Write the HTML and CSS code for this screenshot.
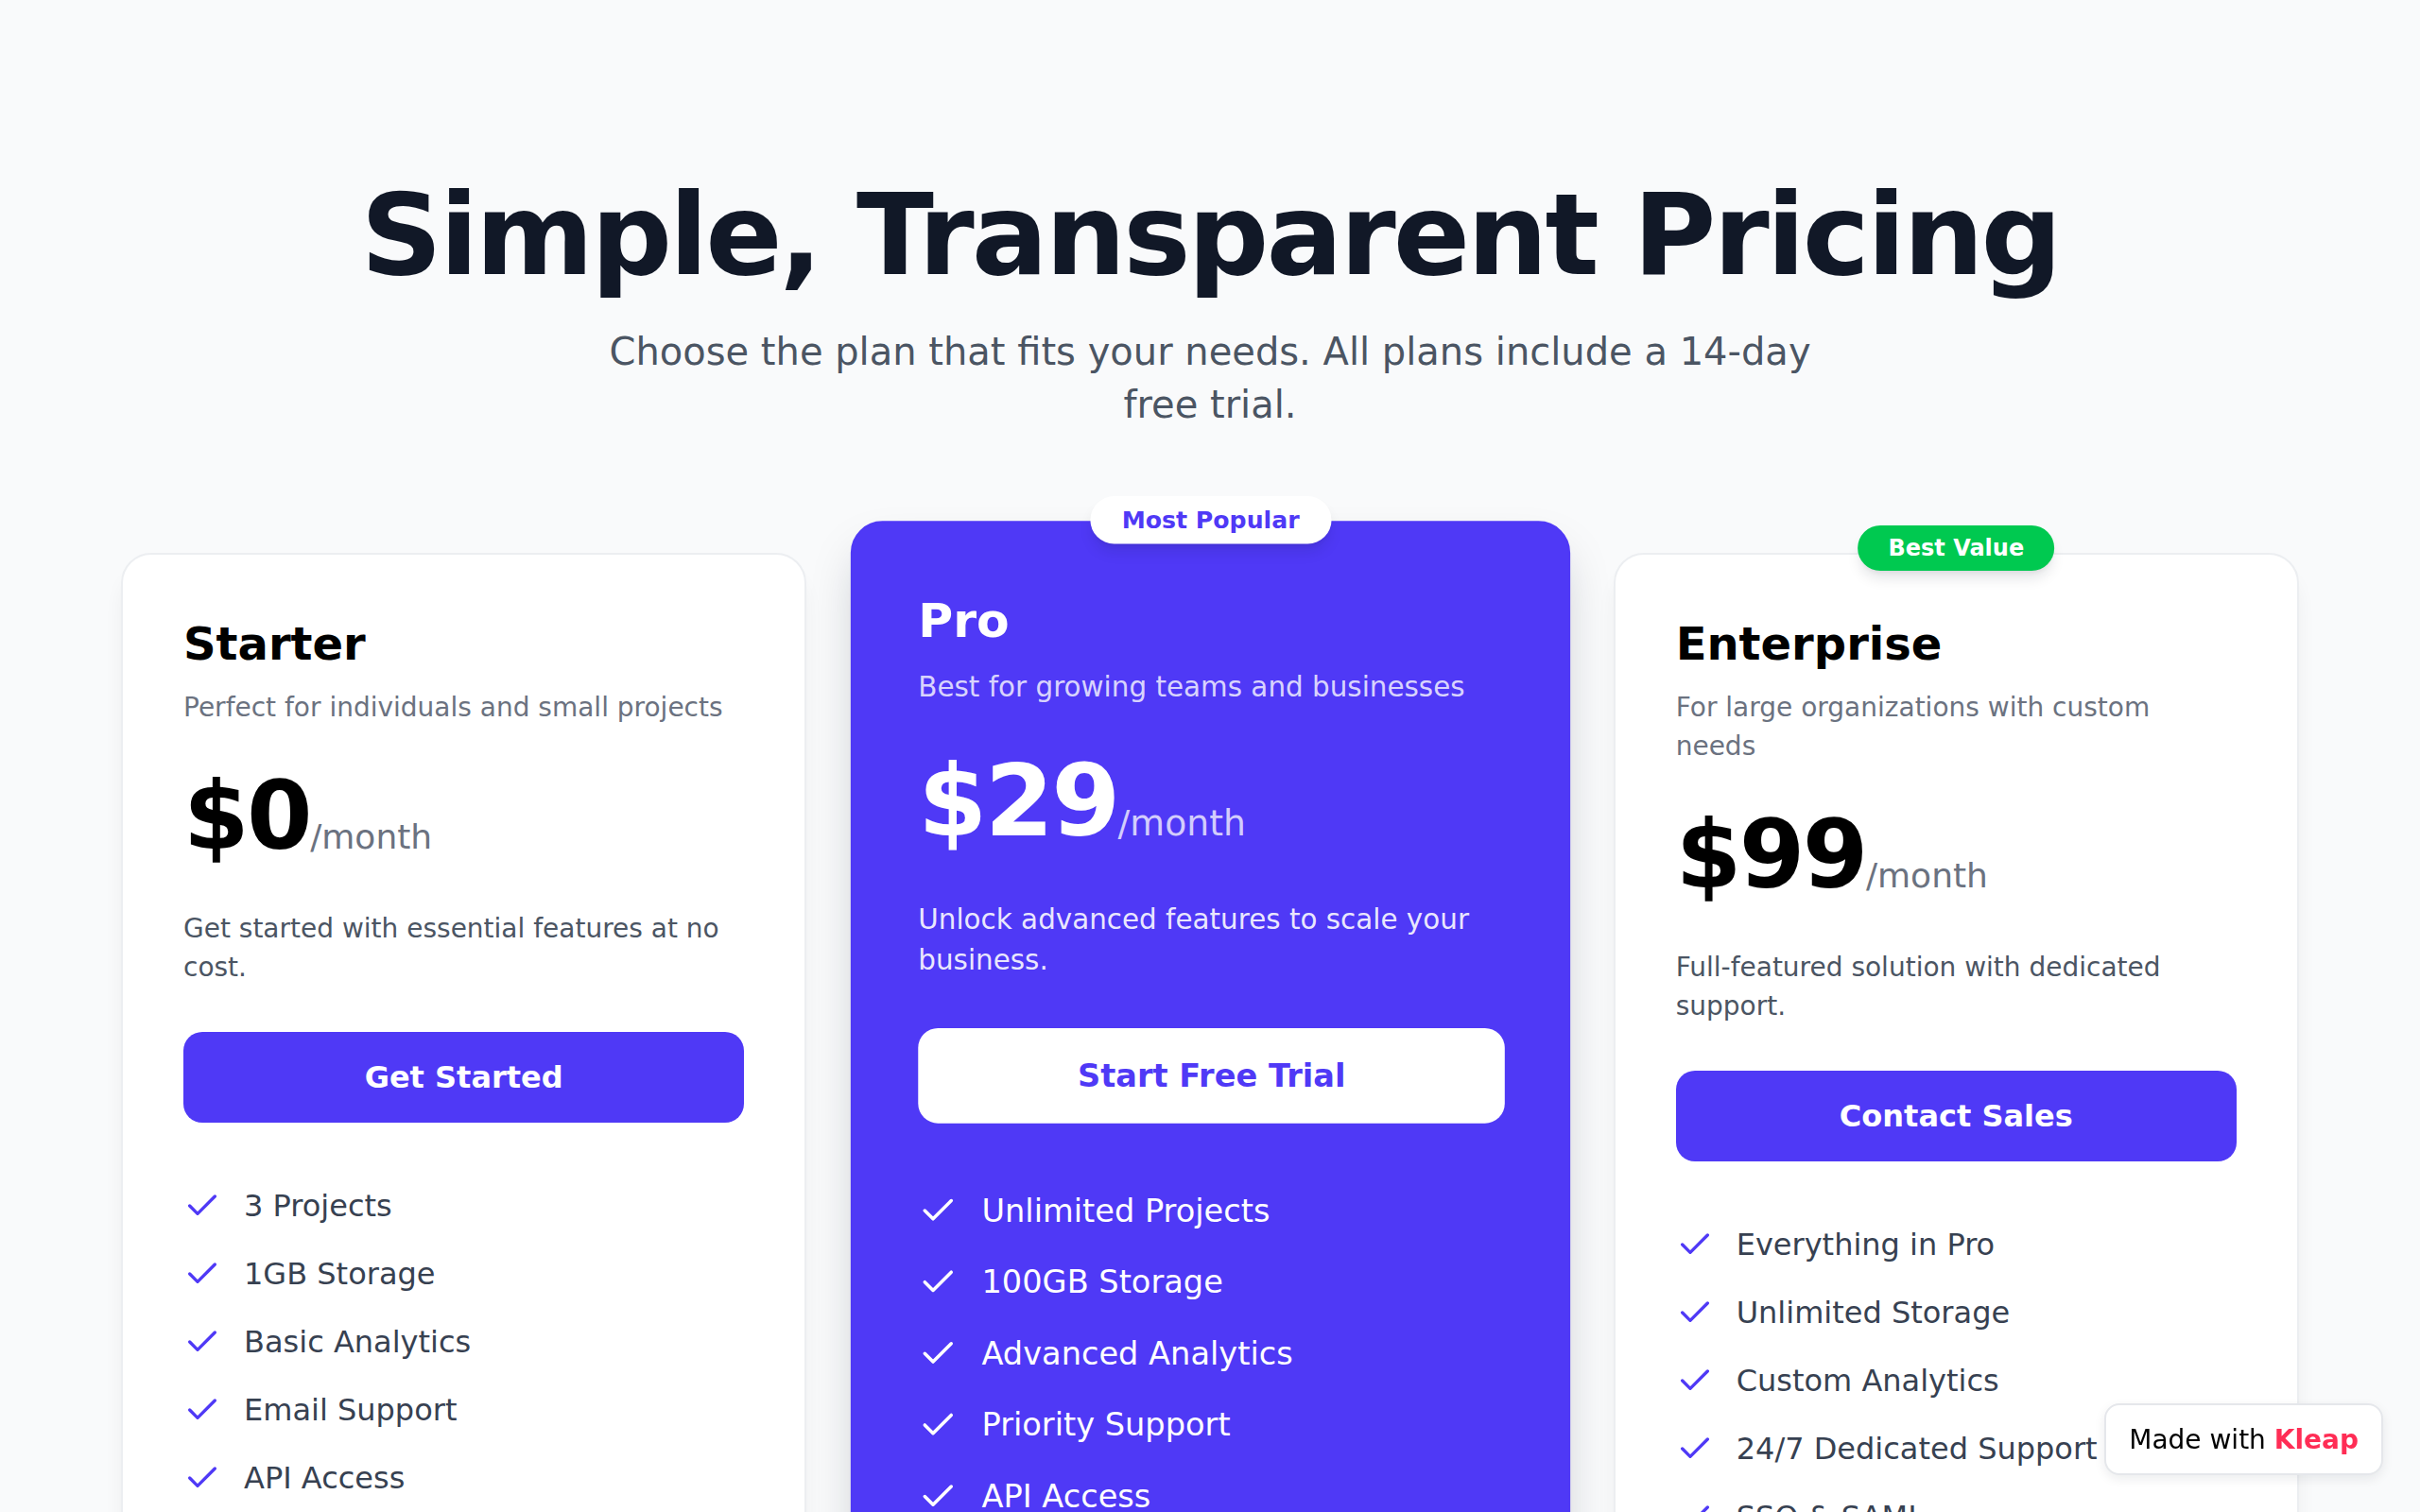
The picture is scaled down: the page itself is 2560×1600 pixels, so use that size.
FILE: index.html
```html
<!DOCTYPE html>
<html lang="en">
<head>
<meta charset="utf-8">
<title>Pricing</title>
<link rel="stylesheet" href="styles.css">
</head>
<body>
<main class="pricing">
  <header class="pricing-head">
    <h1 class="pricing-title">Simple, Transparent Pricing</h1>
    <p class="pricing-lead">Choose the plan that fits your needs. All plans include a 14-day free trial.</p>
  </header>

  <section class="plans">
    <article class="plan">
      <h2 class="plan-name">Starter</h2>
      <p class="plan-tagline">Perfect for individuals and small projects</p>
      <div class="plan-price"><span class="plan-amount">$0</span><span class="plan-period">/month</span></div>
      <p class="plan-blurb">Get started with essential features at no cost.</p>
      <button class="plan-cta" type="button">Get Started</button>
      <ul class="plan-features">
        <li><svg class="check" viewBox="0 0 24 24" fill="none" stroke="currentColor" stroke-width="2" stroke-linecap="round" stroke-linejoin="round"><path d="M20 6 9 17l-5-5"/></svg>3 Projects</li>
        <li><svg class="check" viewBox="0 0 24 24" fill="none" stroke="currentColor" stroke-width="2" stroke-linecap="round" stroke-linejoin="round"><path d="M20 6 9 17l-5-5"/></svg>1GB Storage</li>
        <li><svg class="check" viewBox="0 0 24 24" fill="none" stroke="currentColor" stroke-width="2" stroke-linecap="round" stroke-linejoin="round"><path d="M20 6 9 17l-5-5"/></svg>Basic Analytics</li>
        <li><svg class="check" viewBox="0 0 24 24" fill="none" stroke="currentColor" stroke-width="2" stroke-linecap="round" stroke-linejoin="round"><path d="M20 6 9 17l-5-5"/></svg>Email Support</li>
        <li><svg class="check" viewBox="0 0 24 24" fill="none" stroke="currentColor" stroke-width="2" stroke-linecap="round" stroke-linejoin="round"><path d="M20 6 9 17l-5-5"/></svg>API Access</li>
      </ul>
    </article>

    <article class="plan plan--featured">
      <span class="plan-badge plan-badge--popular">Most Popular</span>
      <h2 class="plan-name">Pro</h2>
      <p class="plan-tagline">Best for growing teams and businesses</p>
      <div class="plan-price"><span class="plan-amount">$29</span><span class="plan-period">/month</span></div>
      <p class="plan-blurb">Unlock advanced features to scale your business.</p>
      <button class="plan-cta" type="button">Start Free Trial</button>
      <ul class="plan-features">
        <li><svg class="check" viewBox="0 0 24 24" fill="none" stroke="currentColor" stroke-width="2" stroke-linecap="round" stroke-linejoin="round"><path d="M20 6 9 17l-5-5"/></svg>Unlimited Projects</li>
        <li><svg class="check" viewBox="0 0 24 24" fill="none" stroke="currentColor" stroke-width="2" stroke-linecap="round" stroke-linejoin="round"><path d="M20 6 9 17l-5-5"/></svg>100GB Storage</li>
        <li><svg class="check" viewBox="0 0 24 24" fill="none" stroke="currentColor" stroke-width="2" stroke-linecap="round" stroke-linejoin="round"><path d="M20 6 9 17l-5-5"/></svg>Advanced Analytics</li>
        <li><svg class="check" viewBox="0 0 24 24" fill="none" stroke="currentColor" stroke-width="2" stroke-linecap="round" stroke-linejoin="round"><path d="M20 6 9 17l-5-5"/></svg>Priority Support</li>
        <li><svg class="check" viewBox="0 0 24 24" fill="none" stroke="currentColor" stroke-width="2" stroke-linecap="round" stroke-linejoin="round"><path d="M20 6 9 17l-5-5"/></svg>API Access</li>
      </ul>
    </article>

    <article class="plan">
      <span class="plan-badge plan-badge--value">Best Value</span>
      <h2 class="plan-name">Enterprise</h2>
      <p class="plan-tagline">For large organizations with custom needs</p>
      <div class="plan-price"><span class="plan-amount">$99</span><span class="plan-period">/month</span></div>
      <p class="plan-blurb">Full-featured solution with dedicated support.</p>
      <button class="plan-cta" type="button">Contact Sales</button>
      <ul class="plan-features">
        <li><svg class="check" viewBox="0 0 24 24" fill="none" stroke="currentColor" stroke-width="2" stroke-linecap="round" stroke-linejoin="round"><path d="M20 6 9 17l-5-5"/></svg>Everything in Pro</li>
        <li><svg class="check" viewBox="0 0 24 24" fill="none" stroke="currentColor" stroke-width="2" stroke-linecap="round" stroke-linejoin="round"><path d="M20 6 9 17l-5-5"/></svg>Unlimited Storage</li>
        <li><svg class="check" viewBox="0 0 24 24" fill="none" stroke="currentColor" stroke-width="2" stroke-linecap="round" stroke-linejoin="round"><path d="M20 6 9 17l-5-5"/></svg>Custom Analytics</li>
        <li><svg class="check" viewBox="0 0 24 24" fill="none" stroke="currentColor" stroke-width="2" stroke-linecap="round" stroke-linejoin="round"><path d="M20 6 9 17l-5-5"/></svg>24/7 Dedicated Support</li>
        <li><svg class="check" viewBox="0 0 24 24" fill="none" stroke="currentColor" stroke-width="2" stroke-linecap="round" stroke-linejoin="round"><path d="M20 6 9 17l-5-5"/></svg>SSO &amp; SAML</li>
        <li><svg class="check" viewBox="0 0 24 24" fill="none" stroke="currentColor" stroke-width="2" stroke-linecap="round" stroke-linejoin="round"><path d="M20 6 9 17l-5-5"/></svg>Custom Integrations</li>
      </ul>
    </article>
  </section>
</main>

<a class="made-with" href="#">Made with <strong>Kleap</strong></a>
</body>
</html>
```

FILE: styles.css
```css
* {
  box-sizing: border-box;
}

body {
  margin: 0;
  background: #f9fafb;
  font-family: "DejaVu Sans", "Noto Sans", sans-serif;
  color: #111827;
}

/* Page header */
.pricing {
  padding: 189px 128px 160px;
}

.pricing-head {
  display: flex;
  flex-direction: column;
  align-items: center;
  text-align: center;
}

.pricing-title {
  margin: 0;
  font-size: 120px;
  line-height: 1;
  font-weight: 700;
  letter-spacing: -0.025em;
  color: #111827;
}

.pricing-lead {
  margin: 35px 0 0;
  max-width: 1300px;
  font-size: 40px;
  line-height: 56px;
  color: #4b5563;
}

/* Plan cards */
.plans {
  margin-top: 129px;
  display: grid;
  grid-template-columns: repeat(3, minmax(0, 1fr));
  gap: 64px;
}

.plan {
  position: relative;
  background: #ffffff;
  border: 2px solid #eceef1;
  border-radius: 32px;
  padding: 64px;
  box-shadow: 0 20px 25px -5px rgba(17, 24, 39, 0.07), 0 8px 10px -6px rgba(17, 24, 39, 0.07);
}

.plan-name {
  margin: 0;
  font-size: 48px;
  line-height: 60px;
  font-weight: 700;
  color: #000000;
}

.plan-tagline {
  margin: 17px 0 0;
  font-size: 28px;
  line-height: 41px;
  color: #6b7280;
}

.plan-price {
  margin-top: 45px;
  display: flex;
  align-items: baseline;
}

.plan-amount {
  font-size: 100px;
  line-height: 100px;
  font-weight: 700;
  letter-spacing: -0.025em;
  color: #000000;
}

.plan-period {
  font-size: 36px;
  color: #6b7280;
}

.plan-blurb {
  margin: 48px 0 0;
  font-size: 28px;
  line-height: 41px;
  color: #4b5563;
}

.plan-cta {
  display: block;
  width: 100%;
  margin-top: 48px;
  padding: 24px;
  border: 0;
  border-radius: 20px;
  background: #4f39f6;
  color: #ffffff;
  font-family: inherit;
  font-size: 32px;
  line-height: 48px;
  font-weight: 700;
  cursor: pointer;
}

.plan-features {
  list-style: none;
  margin: 64px 0 0;
  padding: 0;
  display: flex;
  flex-direction: column;
  gap: 24px;
}

.plan-features li {
  display: flex;
  align-items: center;
  gap: 24px;
  font-size: 32px;
  line-height: 48px;
  color: #374151;
}

.check {
  width: 40px;
  height: 40px;
  flex: none;
  color: #4f39f6;
}

/* Highlighted plan */
.plan--featured {
  z-index: 1;
  margin-top: -4px;
  padding: 68px 64px 64px 66px;
  background: #4f39f6;
  border-color: #4f39f6;
  transform: translateX(1px) scale(1.05);
  box-shadow: 0 25px 50px -12px rgba(17, 24, 39, 0.25);
}

.plan--featured .plan-name {
  color: #ffffff;
}

.plan--featured .plan-tagline {
  color: rgba(255, 255, 255, 0.8);
}

.plan--featured .plan-amount {
  color: #ffffff;
}

.plan--featured .plan-period {
  color: rgba(255, 255, 255, 0.75);
}

.plan--featured .plan-blurb {
  color: rgba(255, 255, 255, 0.9);
}

.plan--featured .plan-cta {
  background: #ffffff;
  color: #4f39f6;
}

.plan--featured .plan-features li,
.plan--featured .check {
  color: #ffffff;
}

/* Ribbons above the cards */
.plan-badge {
  position: absolute;
  left: 50%;
  transform: translateX(-50%);
  padding: 8px 32px;
  border-radius: 999px;
  font-size: 24px;
  line-height: 32px;
  font-weight: 700;
  white-space: nowrap;
  box-shadow: 0 10px 15px -3px rgba(17, 24, 39, 0.12), 0 4px 6px -4px rgba(17, 24, 39, 0.1);
}

.plan-badge--popular {
  top: -27px;
  background: #ffffff;
  color: #4f39f6;
}

.plan-badge--value {
  top: -31px;
  background: #00c950;
  color: #ffffff;
}

/* Floating credit */
.made-with {
  position: fixed;
  right: 39px;
  bottom: 39px;
  z-index: 10;
  display: flex;
  align-items: center;
  height: 76px;
  padding: 0 24px;
  background: #ffffff;
  border: 2px solid #e5e7eb;
  border-radius: 16px;
  box-shadow: 0 4px 12px rgba(17, 24, 39, 0.08);
  font-size: 28px;
  color: #000000;
  text-decoration: none;
  white-space: pre;
}

.made-with strong {
  font-weight: 700;
  color: #ff2d55;
}
```
